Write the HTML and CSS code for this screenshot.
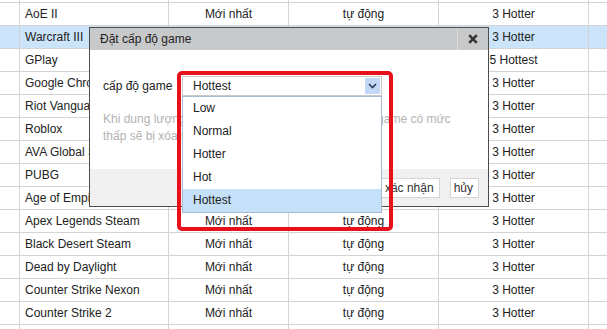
FILE: index.html
```html
<!DOCTYPE html>
<html lang="vi">
<head>
<meta charset="utf-8">
<title>Đặt cấp độ game</title>
<link rel="stylesheet" href="styles.css">
</head>
<body>
<div class="page">
  <div class="grid">
    <div class="row"><div class="c"></div><div class="c name">Steam</div><div class="c mid">Mới nhất</div><div class="c mid">tự động</div><div class="c mid">3 Hotter</div><div class="c"></div></div>
    <div class="row"><div class="c"></div><div class="c name">AoE II</div><div class="c mid">Mới nhất</div><div class="c mid">tự động</div><div class="c mid">3 Hotter</div><div class="c"></div></div>
    <div class="row sel"><div class="c"></div><div class="c name">Warcraft III</div><div class="c mid">Mới nhất</div><div class="c mid">tự động</div><div class="c mid">3 Hotter</div><div class="c"></div></div>
    <div class="row"><div class="c"></div><div class="c name">GPlay</div><div class="c mid">Mới nhất</div><div class="c mid">tự động</div><div class="c mid">5 Hottest</div><div class="c"></div></div>
    <div class="row"><div class="c"></div><div class="c name">Google Chrome</div><div class="c mid">Mới nhất</div><div class="c mid">tự động</div><div class="c mid">3 Hotter</div><div class="c"></div></div>
    <div class="row"><div class="c"></div><div class="c name">Riot Vanguard</div><div class="c mid">Mới nhất</div><div class="c mid">tự động</div><div class="c mid">3 Hotter</div><div class="c"></div></div>
    <div class="row"><div class="c"></div><div class="c name">Roblox</div><div class="c mid">Mới nhất</div><div class="c mid">tự động</div><div class="c mid">3 Hotter</div><div class="c"></div></div>
    <div class="row"><div class="c"></div><div class="c name">AVA Global Steam</div><div class="c mid">Mới nhất</div><div class="c mid">tự động</div><div class="c mid">3 Hotter</div><div class="c"></div></div>
    <div class="row"><div class="c"></div><div class="c name">PUBG</div><div class="c mid">Mới nhất</div><div class="c mid">tự động</div><div class="c mid">3 Hotter</div><div class="c"></div></div>
    <div class="row"><div class="c"></div><div class="c name">Age of Empires</div><div class="c mid">Mới nhất</div><div class="c mid">tự động</div><div class="c mid">3 Hotter</div><div class="c"></div></div>
    <div class="row"><div class="c"></div><div class="c name">Apex Legends Steam</div><div class="c mid">Mới nhất</div><div class="c mid">tự động</div><div class="c mid">3 Hotter</div><div class="c"></div></div>
    <div class="row"><div class="c"></div><div class="c name">Black Desert Steam</div><div class="c mid">Mới nhất</div><div class="c mid">tự động</div><div class="c mid">3 Hotter</div><div class="c"></div></div>
    <div class="row"><div class="c"></div><div class="c name">Dead by Daylight</div><div class="c mid">Mới nhất</div><div class="c mid">tự động</div><div class="c mid">3 Hotter</div><div class="c"></div></div>
    <div class="row"><div class="c"></div><div class="c name">Counter Strike Nexon</div><div class="c mid">Mới nhất</div><div class="c mid">tự động</div><div class="c mid">3 Hotter</div><div class="c"></div></div>
    <div class="row"><div class="c"></div><div class="c name">Counter Strike 2</div><div class="c mid">Mới nhất</div><div class="c mid">tự động</div><div class="c mid">3 Hotter</div><div class="c"></div></div>
    <div class="row"><div class="c"></div><div class="c name">Valorant</div><div class="c mid">Mới nhất</div><div class="c mid">tự động</div><div class="c mid">3 Hotter</div><div class="c"></div></div>
  </div>

  <div class="dialog">
    <div class="titlebar">
      <div class="title">Đặt cấp độ game</div>
      <div class="close">
        <svg width="10" height="10" viewBox="0 0 10 10"><path d="M1.2 1.2 L8.8 8.8 M8.8 1.2 L1.2 8.8" stroke="#363636" stroke-width="2.6" stroke-linecap="butt"/></svg>
      </div>
    </div>
    <div class="body">
      <div class="field">
        <span class="label">cấp độ game</span>
        <div class="select">
          <span class="value">Hottest</span>
          <span class="arrow"><svg width="9" height="6" viewBox="0 0 9 6"><path d="M1 1 L4.5 4.5 L8 1" fill="none" stroke="#2b3f5c" stroke-width="1.6"/></svg></span>
        </div>
      </div>
      <p class="hint">Khi dung lượng trống của ổ cứng không có đủ, các game có mức<br>thấp sẽ bị xóa trước tiên</p>
    </div>
    <div class="footer">
      <button class="btn">xác nhận</button>
      <button class="btn">hủy</button>
    </div>
    <ul class="list">
      <li class="opt">Low</li>
      <li class="opt">Normal</li>
      <li class="opt">Hotter</li>
      <li class="opt">Hot</li>
      <li class="opt active">Hottest</li>
    </ul>
    <div class="mark"></div>
  </div>
</div>
</body>
</html>
```

FILE: styles.css
```css
* { box-sizing: border-box; }
html, body { margin: 0; padding: 0; background: #fff; }
body {
  font-family: "Liberation Sans", Arial, sans-serif;
  font-size: 12px;
  color: #222;
}
.page {
  position: relative;
  width: 607px;
  height: 329px;
  overflow: hidden;
}
.grid { margin-top: -20px; }
.row {
  display: grid;
  grid-template-columns: 20px 149px 120px 150px 150px 1fr;
  height: 23px;
}
.row.sel { background: #cce4f9; }
.c {
  border-right: 1px solid #d4d4d4;
  border-bottom: 1px solid #d4d4d4;
  display: flex;
  align-items: center;
  white-space: nowrap;
  overflow: hidden;
  line-height: 22px;
}
.c:last-child { border-right: none; }
.name { padding-left: 5px; }
.mid { justify-content: center; }

.dialog {
  position: absolute;
  left: 89px;
  top: 27px;
  width: 400px;
  height: 180px;
  border: 1px solid #4d4d4d;
  background: #fff;
  display: flex;
  flex-direction: column;
}
.titlebar {
  height: 22px;
  background: #c8c9cb;
  display: flex;
  align-items: center;
}
.title {
  flex: 1;
  padding-left: 10px;
  color: #222;
}
.close {
  width: 31px;
  height: 22px;
  border-left: 1px solid #dcdcdc;
  display: flex;
  align-items: center;
  justify-content: center;
}
.body {
  flex: 1;
  padding: 26px 0 0 13px;
}
.field {
  display: flex;
  align-items: center;
}
.label {
  width: 79px;
  flex: none;
  color: #222;
}
.select {
  width: 200px;
  height: 20px;
  border: 1px solid #c9c9c9;
  display: flex;
  align-items: center;
  padding-left: 10px;
}
.value { flex: 1; }
.arrow {
  width: 15px;
  height: 16px;
  margin-right: 1px;
  background: #c3d8f4;
  display: flex;
  align-items: center;
  justify-content: center;
}
.hint {
  margin: 15px 0 0 0;
  line-height: 17px;
  color: #b3b3b3;
  white-space: nowrap;
}
.footer {
  height: 37px;
  background: #f0f0f0;
  display: flex;
  justify-content: flex-end;
  align-items: flex-start;
  gap: 10px;
  padding: 9px 9px 0 0;
}
.btn {
  height: 20px;
  background: #fff;
  border: 1px solid #d5d5d5;
  font-family: "Liberation Sans", Arial, sans-serif;
  font-size: 12px;
  color: #333;
  padding: 0 5px 0 3px;
  margin: 0;
}
.list {
  position: absolute;
  left: 92px;
  top: 68px;
  width: 200px;
  margin: 0;
  padding: 0;
  list-style: none;
  background: #fff;
  border: 1px solid #a9bbd2;
}
.opt {
  height: 23px;
  line-height: 23px;
  padding-left: 10px;
  color: #222;
}
.opt.active { background: #c5e0f9; }
.mark {
  position: absolute;
  left: 87px;
  top: 43px;
  width: 216px;
  height: 160px;
  border: 4px solid #e8101a;
  border-radius: 5px;
}
```
